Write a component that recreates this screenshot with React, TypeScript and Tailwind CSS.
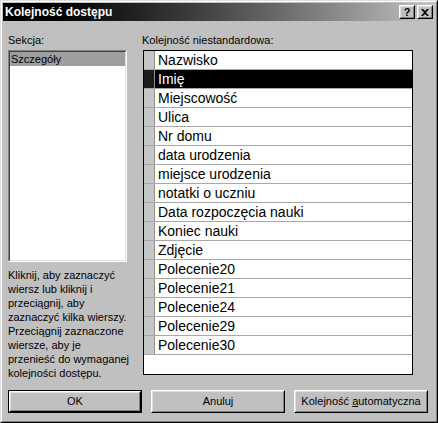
const rows = [
  "Nazwisko",
  "Imię",
  "Miejscowość",
  "Ulica",
  "Nr domu",
  "data urodzenia",
  "miejsce urodzenia",
  "notatki o uczniu",
  "Data rozpoczęcia nauki",
  "Koniec nauki",
  "Zdjęcie",
  "Polecenie20",
  "Polecenie21",
  "Polecenie24",
  "Polecenie29",
  "Polecenie30",
];

const help = [
  "Kliknij, aby zaznaczyć",
  "wiersz lub kliknij i",
  "przeciągnij, aby",
  "zaznaczyć kilka wierszy.",
  "Przeciągnij zaznaczone",
  "wiersze, aby je",
  "przenieść do wymaganej",
  "kolejności dostępu.",
];

function CaptionButton({ children }: { children: React.ReactNode }) {
  return (
    <div className="w-[16px] h-[14px] bg-[#c0c0c0] border border-t-white border-l-white border-r-black border-b-black">
      <div className="h-full border border-t-[#dfdfdf] border-l-[#dfdfdf] border-r-[#808080] border-b-[#808080] flex items-center justify-center">
        {children}
      </div>
    </div>
  );
}

function Button({
  children,
  isDefault,
}: {
  children: React.ReactNode;
  isDefault?: boolean;
}) {
  return (
    <div
      className={
        "w-[134px] h-[23px] " +
        (isDefault ? "border border-black" : "")
      }
    >
      <div className="h-full bg-[#c0c0c0] border border-t-white border-l-white border-r-black border-b-black">
        <div className="h-full border border-t-[#dfdfdf] border-l-[#dfdfdf] border-r-[#808080] border-b-[#808080] flex items-center justify-center text-[11px] text-black">
          {children}
        </div>
      </div>
    </div>
  );
}

export default function App() {
  return (
    <div className="w-[438px] h-[423px] [font-family:'Liberation_Sans',Arial,sans-serif] bg-[#c0c0c0] border border-t-[#dfdfdf] border-l-[#dfdfdf] border-r-black border-b-black">
      <div className="h-full border border-t-white border-l-white border-r-[#808080] border-b-[#808080] p-px flex flex-col">
        {/* title bar */}
        <div className="h-[18px] flex items-center justify-between bg-linear-to-r from-black to-[#c4c4c4] pl-[2px] pr-[2px]">
          <span className="text-white font-bold text-[12px] leading-none">
            Kolejność dostępu
          </span>
          <div className="flex gap-[2px]">
            <CaptionButton>
              <span className="text-[11px] font-bold leading-none text-black">?</span>
            </CaptionButton>
            <CaptionButton>
              <svg width="8" height="7" viewBox="0 0 8 7">
                <path d="M0 0h2l2 2 2-2h2L5 3.5 8 7H6L4 5 2 7H0l3-3.5z" fill="black" />
              </svg>
            </CaptionButton>
          </div>
        </div>

        {/* body */}
        <div className="h-[355px] flex gap-[16px] pl-[5px] pt-[12px] items-start">
          <div className="w-[119px] flex flex-col">
            <div className="text-[11px] leading-[14px] text-black">Sekcja:</div>
            <div className="mt-[3px] h-[212px] border border-t-[#808080] border-l-[#808080] border-r-white border-b-white">
              <div className="h-full bg-white border border-t-[#404040] border-l-[#404040] border-r-[#dfdfdf] border-b-[#dfdfdf]">
                <div className="h-[14px] bg-[#9e9e9e] text-[11px] leading-[14px] text-black pl-[1px]">
                  Szczegóły
                </div>
              </div>
            </div>
            <div className="mt-[6px] text-[11px] leading-[14px] text-black">
              {help.map((l) => (
                <div key={l} className="whitespace-nowrap">{l}</div>
              ))}
            </div>
          </div>

          <div className="w-[270px] flex flex-col">
            <div className="text-[11px] leading-[14px] text-black -ml-[1px]">
              Kolejność niestandardowa:
            </div>
            <div className="mt-[3px] h-[325px] bg-white border border-black">
              {rows.map((r, i) => {
                const sel = i === 1;
                return (
                  <div
                    key={r}
                    className={
                      "h-[19px] flex border-b border-[#a8a8a8] " +
                      (sel ? "bg-black" : "bg-white")
                    }
                  >
                    <div
                      className={
                        "w-[11px] shrink-0 border-r border-[#909090] " +
                        (sel ? "bg-[#1c1c1c]" : "bg-[#c6c6c6]")
                      }
                    />
                    <div
                      className={
                        "pl-[3px] text-[14px] leading-[18px] " +
                        (sel ? "text-white" : "text-black")
                      }
                    >
                      {r}
                    </div>
                  </div>
                );
              })}
            </div>
          </div>
        </div>

        {/* buttons */}
        <div className="flex gap-[9px] pl-[5px] mt-[14px]">
          <Button isDefault>OK</Button>
          <Button>Anuluj</Button>
          <Button>
            <span>
              Kolejność <span className="underline">a</span>utomatyczna
            </span>
          </Button>
        </div>
      </div>
    </div>
  );
}
